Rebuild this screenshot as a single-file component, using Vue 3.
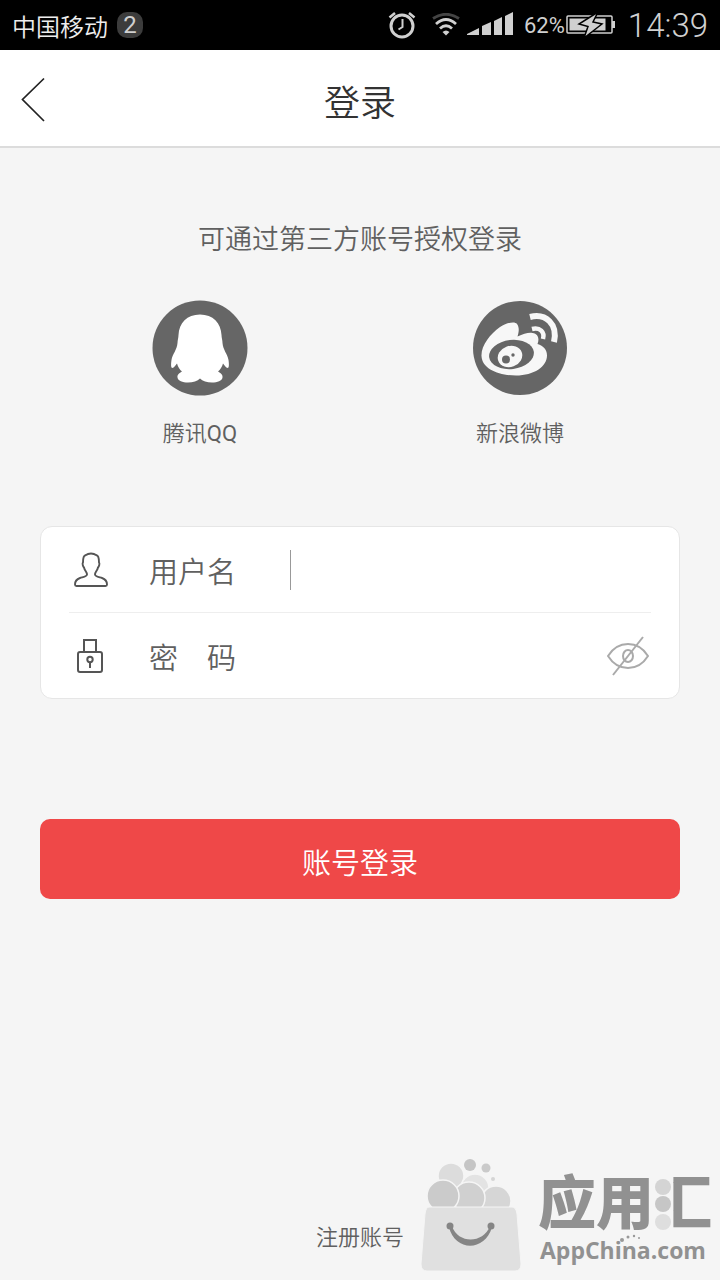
<script setup>
import { ref } from 'vue'

const username = ref('')
const password = ref('')
const showPassword = ref(false)
</script>

<template>
  <div class="page">
    <div class="status">
      <span class="carrier">中国移动</span>
      <span class="count">2</span>
      <svg class="alarm" width="28" height="30" viewBox="0 0 28 30" fill="none" stroke="#d0d0d0">
        <circle cx="14" cy="16" r="11" stroke-width="3" />
        <path d="M14.500 9v8l-4 2.500" stroke-width="2" />
        <path d="M1.500 7.500 7 3M26.500 7.500 21 3" stroke-width="2.500" />
      </svg>
      <svg class="wifi" width="30" height="24" viewBox="0 0 30 24" fill="none" stroke="#d0d0d0" stroke-width="2.800">
        <path d="M2 5.500Q15-3 28 5.500" stroke="#444" />
        <path d="M5 11Q15 2 25 11M9 15.500Q15 10 21 15.500" />
        <path d="M11.500 19Q15 16 18.500 19L15 22.500Z" fill="#d0d0d0" stroke="none" />
      </svg>
      <svg class="signal" width="48" height="24" viewBox="0 0 48 24" fill="#d0d0d0">
        <path d="M0 22v-1l12-6v7zM15 22v-9l9-4v13zM27 22V8l8-4v18zM38 22V3l8-4v23z" />
      </svg>
      <span class="percent">62%</span>
      <svg class="battery" width="50" height="26" viewBox="0 0 50 26">
        <rect x="1" y="4" width="45" height="17" rx="1" fill="none" stroke="#d0d0d0" stroke-width="1.500" />
        <path d="M3.500 6.500h36v12h-36z" fill="#d0d0d0" />
        <path d="M46 9h3v7h-3z" fill="#d0d0d0" />
        <path d="M32 0 13 12l9 2.500L18 26l18-14-9-2z" fill="#d0d0d0" stroke="#000" stroke-width="1.500" />
      </svg>
      <time class="clock">14:39</time>
    </div>

    <header class="header">
      <button class="back" type="button" aria-label="返回">
        <svg width="26" height="46" viewBox="0 0 26 46" fill="none" stroke="#222" stroke-width="1.700">
          <path d="M24 1.500 2.500 22.500 24 44" />
        </svg>
      </button>
      <h1>登录</h1>
    </header>

    <main class="content">
      <p class="hint">可通过第三方账号授权登录</p>

      <div class="providers">
        <button class="provider" type="button">
          <svg width="96" height="96" viewBox="0 0 96 96">
            <circle cx="48" cy="48" r="47.500" fill="#666" />
            <path fill="#fff" d="M48 14.500C35 14.500 27 23 26.500 35c0 3-1 5-1 8-.5 7-5 11-6 17-.7 5-.5 8 .8 8 1.700 0 3.500-3 4.700-4.500 1 3.500 2.600 6 5 8-2.500 1.500-5 3-4.500 6 .5 3.500 5 5 10.500 5 5 0 9.500-1.500 12-4 2.500 2.500 7 4 12 4 5.500 0 10-1.500 10.500-5 .5-3-2-4.500-4.500-6 2.400-2 4-4.500 5-8 1.200 1.500 3 4.500 4.700 4.500 1.300 0 1.500-3 .8-8-1-6-5.500-10-6-17 0-3-1-5-1-8C69 23 61 14.500 48 14.500Z" />
          </svg>
          <span>腾讯<span class="latin">QQ</span></span>
        </button>
        <button class="provider" type="button">
          <svg width="96" height="96" viewBox="0 0 96 96">
            <circle cx="48" cy="48" r="47" fill="#666" />
            <path fill="#f7f7f7" d="M45 24c-2-3-10-1.500-17 3C18 34 9 46 9.500 56 10 69 27 75.500 44 75.500c18 0 31-9 31-20 0-6-3.500-9.500-9.500-11.500 2-5 1-10-5-11-4-.8-9 1-15 3.500 1.500-5 2-9-.5-12.500Z" />
            <ellipse cx="39.500" cy="54.500" rx="22.500" ry="14.500" transform="rotate(-7 39.500 54.500)" fill="#666" />
            <ellipse cx="38" cy="56.500" rx="12.500" ry="10.500" transform="rotate(-20 38 56.500)" fill="#f7f7f7" />
            <circle cx="34" cy="59.500" r="4" fill="#666" />
            <circle cx="41" cy="55" r="1.700" fill="#666" />
            <g fill="none" stroke="#f7f7f7">
              <path d="M58 17c16-4 28 7 24 25" stroke-width="6" />
              <path d="M60 29c8-2 13 3 11 10" stroke-width="4.500" />
            </g>
          </svg>
          <span>新浪微博</span>
        </button>
      </div>

      <form class="form" @submit.prevent>
        <div class="fields">
          <div class="row">
            <svg class="lead" width="36" height="36" viewBox="0 0 36 36" fill="none" stroke="#555" stroke-width="1.900" stroke-linejoin="round">
              <path d="M18 1.500c-3 0-4.500 1-5.500 1.700-2 .3-2.500 2-2.500 7.300-1 1 0 4 1 5 .8 3.500 3 4.500 3 7 0 2-4 2.500-7 3.500-3.500 1.200-5 3-5 6.500 0 1.200.5 1.500 1.500 1.500h29c1 0 1.500-.3 1.500-1.500 0-3.500-1.500-5.300-5-6.500-3-1-7-1.500-7-3.500 0-2.500 2.200-3.500 3-7 1-1 2-4 1-5 0-5.300-.5-7-2.500-7.300-1-.7-2.500-1.700-5.500-1.700Z" />
            </svg>
            <label for="username">用户名</label>
            <span class="caret"></span>
            <input id="username" v-model="username" type="text" autocomplete="off" />
          </div>
          <div class="row">
            <svg class="lead" width="36" height="36" viewBox="0 0 36 36" fill="none" stroke="#555" stroke-width="2">
              <rect x="5" y="14" width="24" height="20" rx="2" />
              <path d="M11 14V2h12v12M17 24v6" />
              <circle cx="17" cy="21.500" r="2.700" />
            </svg>
            <label for="password">密　码</label>
            <input id="password" v-model="password" :type="showPassword ? 'text' : 'password'" />
            <button class="eye" type="button" aria-label="显示密码" @click="showPassword = !showPassword">
              <svg width="42" height="40" viewBox="0 0 42 40" fill="none" stroke="#aaa" stroke-width="2">
                <path d="M1 20C11 4 31 4 41 20 31 36 11 36 1 20Z" />
                <ellipse cx="21" cy="20" rx="5" ry="6" />
                <path d="M36 1 6 39" />
              </svg>
            </button>
          </div>
        </div>
        <button class="submit" type="submit">账号登录</button>
      </form>

      <a class="register" href="#">注册账号</a>
    </main>

    <div class="watermark">
      <svg width="102" height="114" viewBox="0 0 102 114">
        <g stroke="#f5f5f5" stroke-width="1.500">
          <circle cx="31" cy="18" r="13" fill="#dcdcdc" />
          <circle cx="55" cy="30" r="14" fill="#e3e3e3" />
          <circle cx="76" cy="43" r="15" fill="#d6d6d6" />
          <circle cx="49" cy="40" r="16" fill="#d0d0d0" />
          <circle cx="23" cy="38" r="16" fill="#cbcbcb" />
        </g>
        <circle cx="50" cy="7" r="6" fill="#c5c5c5" />
        <circle cx="66" cy="10" r="4.500" fill="#cacaca" />
        <circle cx="73" cy="21" r="2" fill="#d5d5d5" />
        <path d="M9 49h83q4 0 5 7l4 50q0 7-6 7H7q-6 0-6-7l4-50q1-7 4-7Z" fill="#e0e0e0" stroke="#f5f5f5" />
        <path d="M29 69c6 25 36 25 43 0l-2-1C63 86 38 86 32 68Z" fill="#858585" />
        <circle cx="30" cy="68" r="3.500" fill="#858585" />
        <circle cx="71" cy="68" r="3.500" fill="#858585" />
      </svg>
      <div class="brand">
        <div class="brand-name">应用<span class="last">汇</span>
          <svg class="drops" width="18" height="54" viewBox="0 0 18 54">
            <circle cx="9" cy="9" r="8" fill="#d4d4d4" />
            <circle cx="9" cy="26" r="8" fill="#c6c6c6" />
            <circle cx="9" cy="44" r="8" fill="#dedede" />
          </svg>
        </div>
        <div class="brand-site">AppChina.com
          <svg class="sparks" width="22" height="8" viewBox="0 0 22 8" fill="#999">
            <circle cx="2" cy="6" r="2" />
            <circle cx="8" cy="3" r="1.500" />
            <circle cx="14" cy="2" r="1.200" />
            <circle cx="19" cy="4" r="1" />
          </svg>
        </div>
      </div>
    </div>
  </div>
</template>

<style>
body {
  background: #f5f5f5;
}
</style>

<style scoped>
.page {
  position: relative;
  display: flex;
  flex-direction: column;
  min-height: 100vh;
  background: #f5f5f5;
  color: #606060;
  font-family: Roboto, "Noto Sans CJK SC", sans-serif;
  font-weight: 350;
}

button {
  padding: 0;
  border: 0;
  background: none;
  color: inherit;
  font: inherit;
  cursor: pointer;
}

svg {
  display: block;
  flex: none;
}

.status {
  display: flex;
  align-items: center;
  height: 50px;
  padding: 0 12px;
  background: #000;
  color: #d0d0d0;
}

.carrier {
  color: #eee;
  font-size: 24px;
}

.count {
  width: 26px;
  margin-left: 9px;
  border-radius: 10px;
  background: #3c3c3c;
  font-size: 24px;
  font-weight: 400;
  line-height: 26px;
  text-align: center;
}

.alarm {
  margin-left: auto;
}

.wifi {
  margin-left: 15px;
}

.signal {
  margin-left: 6px;
  overflow: visible;
}

.percent {
  margin-left: 9px;
  font-size: 22px;
  font-weight: 400;
}

.battery {
  margin-left: 1px;
}

.clock {
  margin-left: 12px;
  font-size: 33px;
  font-weight: 300;
}

.header {
  display: grid;
  grid-template-columns: 1fr auto 1fr;
  align-items: center;
  height: 96px;
  border-bottom: 2px solid #dcdcdc;
  background: #fff;
}

.back {
  justify-self: start;
  padding: 4px 20px 0;
}

h1 {
  margin: 0;
  padding-top: 4px;
  color: #333;
  font-size: 36px;
  font-weight: 350;
}

.content {
  display: flex;
  flex: 1;
  flex-direction: column;
  padding: 72px 40px 26px;
}

.hint {
  margin: 0;
  font-size: 27px;
  line-height: 40px;
  text-align: center;
}

.providers {
  display: grid;
  grid-template-columns: 1fr 1fr;
  margin-top: 40px;
}

.provider {
  display: flex;
  flex-direction: column;
  align-items: center;
  gap: 22px;
  font-size: 22px;
  line-height: 32px;
}

.latin {
  font-weight: 400;
}

.fields {
  margin-top: 76px;
  padding: 0 28px;
  border: 1px solid #e6e6e6;
  border-radius: 12px;
  background: #fff;
}

.row {
  display: flex;
  align-items: center;
  height: 85px;
  padding: 0 2px 0 4px;
}

.row + .row {
  border-top: 1px solid #eee;
}

.lead {
  margin-right: 40px;
}

label {
  width: 141px;
  padding-top: 6px;
  font-size: 29px;
  line-height: 40px;
}

.caret {
  width: 1px;
  height: 40px;
  background: #999;
}

input {
  flex: 1;
  min-width: 0;
  height: 60px;
  padding: 0 8px;
  border: 0;
  outline: 0;
  background: transparent;
  color: #555;
  font: inherit;
  font-size: 29px;
}

.submit {
  display: block;
  width: 100%;
  height: 80px;
  margin-top: 120px;
  padding-top: 4px;
  border-radius: 10px;
  background: #ef4848;
  color: #fff;
  font-size: 29px;
}

.register {
  align-self: center;
  margin-top: auto;
  color: inherit;
  font-size: 22px;
  line-height: 32px;
  text-decoration: none;
}

.watermark {
  position: absolute;
  right: 8px;
  bottom: 8px;
  display: flex;
  align-items: flex-end;
  gap: 16px;
  color: #919191;
  pointer-events: none;
}

.brand {
  padding-bottom: 6px;
}

.brand-name {
  position: relative;
  font-family: "Noto Sans CJK SC", sans-serif;
  font-size: 58px;
  font-weight: 900;
  line-height: 58px;
}

.last {
  display: inline-block;
  clip-path: inset(0 0 0 19px);
}

.drops {
  position: absolute;
  top: 8px;
  left: 116px;
}

.brand-site {
  position: relative;
  margin-top: 6px;
  padding-left: 2px;
  font-family: "Open Sans", sans-serif;
  font-size: 23px;
  font-weight: 700;
  line-height: 32px;
}

.sparks {
  position: absolute;
  top: 0;
  left: 82px;
}
</style>
